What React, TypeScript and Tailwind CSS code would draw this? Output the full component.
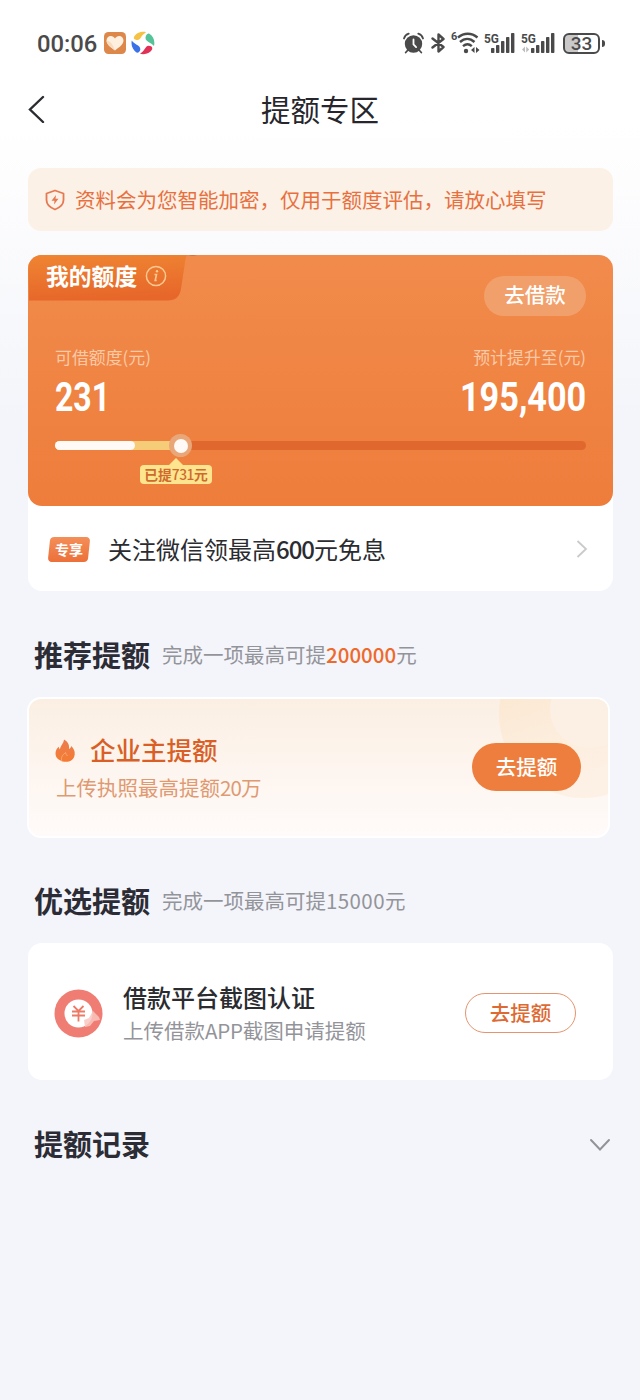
import { ReactNode } from "react";

const signalBars = [5, 8, 12, 16, 20];

function SignalIcon({ idle }: { idle?: boolean }) {
  return (
    <div className="relative w-8 h-6 text-[#4a4a4a]">
      <span className="absolute left-0 top-px text-[13.500px] leading-[12px] font-bold origin-left scale-x-[0.88]">
        5G
      </span>
      <svg width="34" height="24" viewBox="0 0 34 24" fill="currentColor">
        {signalBars.map((height, index) => (
          <rect
            key={index}
            x={(idle ? 10 : 7) + index * 5}
            y={22 - height}
            width="3.4"
            height={height}
            rx="0.8"
          />
        ))}
        {idle && (
          <path d="M1 18.500 4 15.500v6zM8.200 18.500 5.200 15.500v6z" fill="#bdbdbd" />
        )}
      </svg>
    </div>
  );
}

function StatusBar() {
  return (
    <div className="h-[86px] pl-[37px] pr-[35px] flex justify-between items-center text-[#4a4a4a] font-['Roboto',sans-serif]">
      <div className="flex items-center">
        <p className="w-[61px] pt-px text-[23.8px] leading-7 font-medium">00:06</p>
        <svg className="ml-[6px]" width="22" height="22" viewBox="0 0 22 22">
          <rect width="22" height="22" rx="4.500" fill="#dd874b" />
          <path
            d="M11 18.500C6 15 2.500 12 2.500 8.600c0-2.800 2-4.600 4.300-4.600C8.600 4 10.100 5 11 6.600 11.900 5 13.400 4 15.200 4c2.300 0 4.300 1.800 4.300 4.600 0 3.400-3.500 6.400-8.500 9.900z"
            fill="#fdf0df"
          />
          <path d="M2.600 9c2.400-1 6 2.500 8.400 9.500C6 15 2.800 12.200 2.600 9z" fill="#f8dcc0" />
        </svg>
        <svg className="ml-[5px]" width="24" height="24" viewBox="0 0 24 24">
          <path d="M3 6C5 2 11 0 15 1.200c-1.500 1.300-3.500 2.600-4.500 4.300-1.200 2-2.200 3.500-4.200 3.500S2.200 7.800 3 6z" fill="#f6c244" />
          <path d="M18 2.500c4.500 2.500 6.200 7.500 5 12.500-1.300-1.500-3-2.500-4.700-3.500-2-1.200-3.800-2.300-3.800-4.500S16 2 18 2.500z" fill="#55c398" />
          <path d="M.8 9.500c1 1.700 3 3 4.900 4.200 2 1.200 3.800 2.300 3.600 4.800S6.500 22.500 5 21.200C1.500 18.500-.2 14 .8 9.500z" fill="#3a72e8" />
          <path d="M20.500 15.500c1.500 1.500.8 3.500-1 5-3 2.500-7 3.200-10.500 2.300 1.800-1.300 3.500-2.800 4.500-4.500 1.200-2 2.300-3.500 4-3.600 1.200 0 2.200.2 3 .8z" fill="#e03157" />
        </svg>
      </div>
      <div className="flex items-center">
        <svg width="22" height="22" viewBox="0 0 22 22" fill="none" stroke="#4a4a4a" strokeLinecap="round">
          <circle cx="10.500" cy="12" r="8.700" fill="#4a4a4a" stroke="none" />
          <path d="M1 6.500C1.700 4 3.500 2.300 5.700 1.600M20 6.500C19.300 4 17.500 2.300 15.300 1.600M4.500 18.500l-1.800 2M16.500 18.500l1.800 2" strokeWidth="1.800" />
          <path d="M10.500 7.500v5l2.600 2.600" stroke="#fff" strokeWidth="1.800" />
        </svg>
        <svg className="ml-[6px]" width="15" height="20" viewBox="0 0 15 20" fill="none" stroke="#4a4a4a" strokeWidth="2.400">
          <path d="M1.500 5.500 12.500 14 7.500 18.500v-17L12.500 6 1.500 14.500" strokeLinejoin="round" strokeLinecap="round" />
        </svg>
        <div className="relative ml-[5px] w-[29px] h-6">
          <span className="absolute left-0 top-0 text-[11px] leading-[11px] font-bold">6</span>
          <svg width="29" height="24" viewBox="0 0 29 24" fill="none" stroke="#4a4a4a" strokeWidth="2.400">
            <path d="M7 6.500c6-5 13.500-5 19.500 0M9 11c4.500-4.200 10-4.200 14.500 0M12 15.200c3-2.600 6-2.600 8.800 0" />
            <circle cx="15" cy="20" r="2.200" fill="#4a4a4a" stroke="none" />
            <path d="M20 19 23.500 16v6zM28.500 19 25 16v6z" fill="#4a4a4a" stroke="none" />
          </svg>
        </div>
        <div className="ml-1 flex gap-[5px]">
          <SignalIcon />
          <SignalIcon idle />
        </div>
        <div className="ml-[10px] flex items-center gap-[2px]">
          <div className="w-[37px] h-[21px] rounded-[6px] border-2 border-[#4a4a4a] bg-linear-to-r from-[#c9c9c9] from-38% to-white to-38% flex justify-center items-center text-[19px] leading-none font-medium">
            33
          </div>
          <div className="w-[3px] h-[7px] rounded-r bg-[#4a4a4a]" />
        </div>
      </div>
    </div>
  );
}

function SectionTitle({ title, children }: { title: string; children?: ReactNode }) {
  return (
    <div className="flex items-center pl-[6px] h-10 pb-[2px]">
      <h2 className="text-[29px] leading-[38px] font-bold text-[#2b2c35]">{title}</h2>
      {children && (
        <p className="ml-3 text-[20.500px] leading-[38px] text-[#93949a]">{children}</p>
      )}
    </div>
  );
}

function QuotaCard() {
  return (
    <div className="mt-6 h-[336px] rounded-[14px] bg-white">
      <div className="relative h-[251px] rounded-[14px] overflow-hidden bg-linear-to-b from-[#f18b4b] to-[#ee7d3b] text-white">
        <div className="flex justify-between">
          <div className="relative w-[160px] h-[46px]">
            <svg className="absolute left-0 top-0" width="170" height="46" viewBox="0 0 170 46">
              <defs>
                <linearGradient id="tab" x1="0" y1="0" x2="0.150" y2="1">
                  <stop offset="0" stopColor="#ef8532" />
                  <stop offset="1" stopColor="#e7672a" />
                </linearGradient>
              </defs>
              <path d="M0 0H160C157 1 157.500 6 156 14L153 34Q151 45.500 140 45.500H1Z" fill="url(#tab)" />
              <path d="M160 0h9q-4 1.500-9 0z" fill="#c96a35" />
            </svg>
            <div className="relative flex items-center pl-[18px] h-[41px]">
              <p className="text-[22.800px] font-bold leading-8">我的额度</p>
              <svg className="ml-[8px]" width="22" height="22" viewBox="0 0 22 22" fill="none" stroke="#fac991">
                <circle cx="11" cy="11" r="9.600" strokeWidth="1.500" />
                <path d="M9.500 9.500h2L10.200 15.500h1.500" strokeWidth="1.600" />
                <circle cx="12" cy="6.300" r="1.200" fill="#fac991" stroke="none" />
              </svg>
            </div>
          </div>
          <button className="mt-[21px] mr-[27px] w-[102px] h-[40px] pb-[3px] rounded-full bg-[#f2a06b] text-[20.500px] leading-none font-medium">
            去借款
          </button>
        </div>
        <div className="px-[27px] mt-[28px] flex justify-between">
          <div>
            <p className="text-[16.900px] leading-[26px] text-[#fbc9a6]">可借额度(元)</p>
            <p className="mt-[2px] w-[54px] text-[41px] leading-[50px] font-bold font-['Roboto',sans-serif] origin-left scale-x-[0.78]">
              231
            </p>
          </div>
          <div className="flex flex-col items-end">
            <p className="text-[16.900px] leading-[26px] text-[#fbc9a6]">预计提升至(元)</p>
            <p className="mt-[2px] text-[41px] leading-[50px] font-bold font-['Roboto',sans-serif] origin-right scale-x-[0.835]">
              195,400
            </p>
          </div>
        </div>
        <div className="relative mx-[27px] mt-[19px] h-[9px] rounded-full bg-[#e0682e]">
          <div className="w-[125px] h-[9px] rounded-full bg-[#f7cc78]">
            <div className="w-[80px] h-[9px] rounded-full bg-[#fffaf5]" />
          </div>
          <div className="absolute left-[114px] -top-[7px] size-[23px] rounded-full bg-[#e9a678] flex justify-center items-center">
            <div className="size-[14px] rounded-full bg-[#fffaf5]" />
          </div>
          <div className="absolute left-[85px] top-[17px] flex flex-col items-center">
            <div className="w-0 h-0 border-x-[7px] border-b-[7px] border-x-transparent border-b-[#fde58f]" />
            <p className="w-[72px] h-[19px] rounded bg-[#fde58f] text-center whitespace-nowrap text-[13.800px] leading-[18px] font-bold text-[#cf6a2c]">
              已提<span className="tracking-[-0.500px] font-medium">731</span>元
            </p>
          </div>
        </div>
      </div>
      <div className="h-[85px] pl-[20px] pr-[24px] pt-px flex items-center">
        <div className="relative w-[42px] h-[25px] flex justify-center items-center">
          <div className="absolute inset-x-[1px] inset-y-0 rounded-[4px] -skew-x-6 bg-linear-to-b from-[#f48e58] to-[#ec7039]" />
          <p className="relative text-[14px] leading-none font-bold text-white">专享</p>
        </div>
        <p className="ml-[18px] text-[24px] leading-8 text-[#2b2c30]">
          关注微信领最高<span className="tracking-[-1px] font-medium">600</span>元免息
        </p>
        <svg className="ml-auto" width="14" height="20" viewBox="0 0 14 20" fill="none" stroke="#c9cacc" strokeWidth="1.800">
          <path d="M2.500 2 11 10l-8.500 8" />
        </svg>
      </div>
    </div>
  );
}

function RecommendCard() {
  return (
    <div className="relative -ml-px mt-[22px] w-[583px] h-[141px] rounded-[14px] border-2 border-white overflow-hidden bg-linear-to-b from-[#fbefe3] to-[#fffbfa]">
      <svg className="absolute right-0 top-0" width="120" height="110" viewBox="0 0 120 110">
        <defs>
          <linearGradient id="ring" x1="0" y1="0" x2="0.300" y2="1">
            <stop offset="0.100" stopColor="#fbe5cb" />
            <stop offset="1" stopColor="#fdf1e6" />
          </linearGradient>
        </defs>
        <circle cx="95" cy="15" r="84" fill="url(#ring)" />
        <circle cx="101" cy="10" r="39" fill="#fcf0e4" />
      </svg>
      <div className="relative h-full pl-[26px] pr-[27px] flex justify-between">
        <div className="pt-[32px]">
          <div className="flex items-center">
            <svg className="mt-[2px]" width="21" height="23" viewBox="0 0 21 23">
              <defs>
                <linearGradient id="flame" x1="0" y1="0" x2="0" y2="1">
                  <stop offset="0" stopColor="#ea7d50" />
                  <stop offset="1" stopColor="#f57b31" />
                </linearGradient>
              </defs>
              <path
                d="M9 0.500c4.500 2.500 5.500 6 5 9.500 1.300-.6 2-1.600 2.300-3 2.500 2.500 3.700 5 3.400 8.500-.3 3.500-2.500 6-5.700 7-1 .3-5.500.3-6.500 0l-1.500-.7C2.500 20.500.5 18 .5 14.500c0-3 1.500-5 3.200-6.700.3 1.200.6 2 1.300 2.700C5.300 6.500 8.500 5 9 .5z"
                fill="url(#flame)"
              />
              <path d="M7 22.500c-1.500-4 .5-6.500 3.500-9 .3 1.500 1 2.700 2 3.500" stroke="#fbb98c" strokeWidth="0.700" fill="none" />
            </svg>
            <h3 className="ml-[14px] text-[25.500px] leading-9 font-medium text-[#d95f27]">企业主提额</h3>
          </div>
          <p className="ml-px mt-[6px] text-[20.500px] leading-7 text-[#df9a72]">
            上传执照最高提额<span className="tracking-[-0.900px]">20</span>万
          </p>
        </div>
        <button className="mt-[44px] w-[109px] h-[48px] rounded-full bg-[#ed7e3d] text-white text-[20.500px] leading-none font-medium pb-[2px]">
          去提额
        </button>
      </div>
    </div>
  );
}

function PlatformCard() {
  return (
    <div className="mt-[22px] h-[137px] rounded-[14px] bg-white pl-[26px] pr-[37px] flex justify-between">
      <div className="flex">
        <svg className="mt-[45px]" width="50" height="50" viewBox="0 0 50 50">
          <circle cx="24.500" cy="25.500" r="24" fill="#f07d74" />
          <circle cx="24.500" cy="25.500" r="14" fill="#fff" />
          <path d="M30 32l5-2 4-7 6 6 1 3-6 1-4 5-5 1z" fill="#f9c6c0" opacity="0.850" />
          <path d="M19.500 18l5 5 5-5M18 23.500h13M18 27.500h13M24.500 23v10.500" stroke="#ec7a66" strokeWidth="1.800" fill="none" />
        </svg>
        <div className="ml-[19px] pt-[36px]">
          <h3 className="text-[24px] leading-9 font-medium text-[#2b2c30]">借款平台截图认证</h3>
          <p className="text-[20.500px] leading-[30px] text-[#93949a]">
            上传借款<span className="tracking-[-0.200px]">APP</span>截图申请提额
          </p>
        </div>
      </div>
      <button className="mt-[50px] w-[111px] h-[40px] rounded-full border border-[#e5946f] text-[20.500px] leading-none font-medium text-[#dd6a33] pb-[2px]">
        去提额
      </button>
    </div>
  );
}

export default function App() {
  return (
    <div className="w-[640px] h-[1400px] overflow-hidden bg-linear-to-b from-white from-[120px] to-[#f4f5fa] to-[420px] font-['Noto_Sans_CJK_SC',sans-serif]">
      <StatusBar />
      <div className="h-[46px] px-7 grid grid-cols-[1fr_auto_1fr] items-center">
        <svg width="18" height="28" viewBox="0 0 18 28" fill="none" stroke="#2b2c30" strokeWidth="2.400" strokeLinecap="round">
          <path d="M15 2 2 14.500 15 27" />
        </svg>
        <h1 className="pb-[2px] text-[29.500px] leading-[44px] text-[#26262c]">提额专区</h1>
      </div>
      <div className="pl-7 pr-[27px] pt-9">
        <div className="h-[63px] rounded-[13px] bg-[#fbf1e6] pl-4 flex items-center">
          <svg width="22" height="22" viewBox="0 0 22 22" fill="none" stroke="#e57952" strokeWidth="1.800" strokeLinejoin="round">
            <path d="M11 1.500 19.500 4.500V11c0 4.500-3.500 7.500-8.500 9.500C6 18.500 2.500 15.500 2.500 11V4.500z" />
            <path d="M12 6 7.500 11.800h3L10 15.500l4.500-5.700h-3z" fill="#e57952" stroke="none" />
          </svg>
          <p className="ml-[9px] pb-[2px] text-[20.500px] leading-8 text-[#e8703f]">
            资料会为您智能加密，仅用于额度评估，请放心填写
          </p>
        </div>
        <QuotaCard />
        <div className="mt-[44px]">
          <SectionTitle title="推荐提额">
            完成一项最高可提<span className="font-medium text-[#ee6a2c]">200000</span>元
          </SectionTitle>
        </div>
        <RecommendCard />
        <div className="mt-[43px]">
          <SectionTitle title="优选提额">
            完成一项最高可提<span className="tracking-[0.400px]">15000</span>元
          </SectionTitle>
        </div>
        <PlatformCard />
        <div className="mt-[44px] flex justify-between items-center pr-[2px]">
          <SectionTitle title="提额记录" />
          <svg className="mt-[2px]" width="22" height="14" viewBox="0 0 22 14" fill="none" stroke="#929398" strokeWidth="2" strokeLinecap="round">
            <path d="M2 2l9 9.500L20 2" />
          </svg>
        </div>
      </div>
    </div>
  );
}
